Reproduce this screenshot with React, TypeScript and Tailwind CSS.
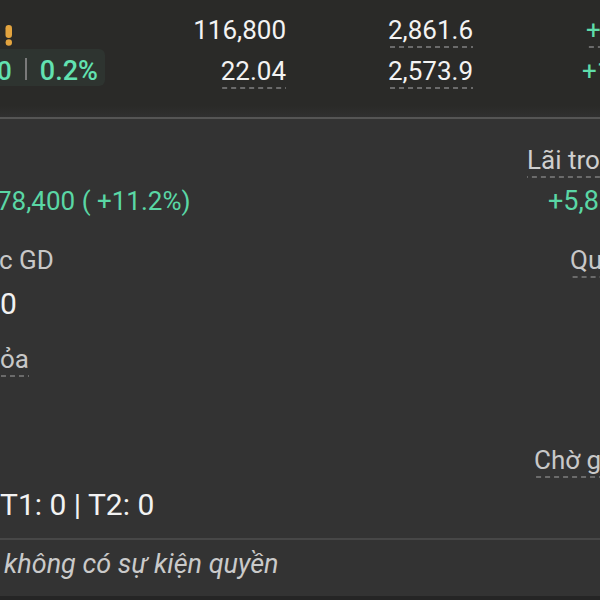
import React from "react";

// dotted underline used by the app under tappable labels / numbers
const dash =
  "inline-block whitespace-nowrap pb-[3px] bg-[linear-gradient(to_right,#6b6b6b_55%,transparent_55%)] bg-[length:9px_2px] bg-bottom bg-repeat-x";

const Warn = () => (
  <svg width="18" height="26" viewBox="0 0 18 26" className="mt-[25px]">
    <rect x="5.5" y="0" width="6.5" height="13" rx="3.2" fill="#e3a43f" />
    <circle cx="8.8" cy="17.5" r="3.2" fill="#e3a43f" />
  </svg>
);

const Row: React.FC<{ className?: string; children?: React.ReactNode }> = ({ className, children }) => (
  <div className={"flex items-start " + (className ?? "")}>{children}</div>
);

export default function App() {
  return (
    <div className="w-[600px] h-[600px] overflow-hidden bg-[#333333] font-['Roboto',sans-serif] flex flex-col">
      {/* watchlist rows */}
      <div className="h-[106px] shrink-0 bg-[#2a2a28] pt-[15px]">
        <div className="grid grid-cols-[105px_181px_102px_86px_126px] h-[41px] text-[26px] leading-[30px] text-[#f3f3f3]">
          <div className="-mt-[15px]">
            <Warn />
          </div>
          <div className="text-right">116,800</div>
          <div />
          <div>
            <span className={dash}>2,861.6</span>
          </div>
          <div className="pl-[112px] text-[#5fdcaa] whitespace-nowrap">
            <span className={dash}>+</span>
          </div>
        </div>
        <div className="grid grid-cols-[105px_181px_102px_86px_126px] h-[41px] text-[26px] leading-[30px] text-[#f3f3f3]">
          <div className="-mt-[7px] h-[37px] pt-[7px] rounded-r-[6px] bg-[#2e3430] flex items-start text-[#62e2b1] font-medium overflow-hidden">
            <span className="-ml-[3px]">0</span>
            <span className="ml-[13px] mr-[13px] mt-[2px] w-[2px] h-[22px] bg-[#7a7a7a]" />
            <span className="text-[27px]">0.2%</span>
          </div>
          <div className="text-right">
            <span className={dash}>22.04</span>
          </div>
          <div />
          <div>
            <span className={dash}>2,573.9</span>
          </div>
          <div className="pl-[108px] text-[#5fdcaa] whitespace-nowrap">+1</div>
        </div>
      </div>
      <div className="h-[11px] shrink-0 bg-gradient-to-b from-[#2a2a28] to-[#303030]" />
      <div className="h-[2px] shrink-0 bg-[#555555]" />

      {/* position detail */}
      <div className="flex-1 flex flex-col text-[26px] leading-[30px]">
        <Row className="mt-[26px] h-[33px]">
          <span className="ml-auto w-[73px] shrink-0 text-[#cfcfcf]">
            <span className={dash}>Lãi tro</span>
          </span>
        </Row>
        <Row className="mt-[8px] h-[30px] text-[#5ad7a5]">
          <span className="-ml-[3px] whitespace-nowrap">78,400 ( +11.2%)</span>
          <span className="ml-auto w-[52px] shrink-0 whitespace-nowrap text-[27px]">+5,8</span>
        </Row>
        <Row className="mt-[29px] h-[33px] text-[#c8c8c8]">
          <span className="-ml-[1px] whitespace-nowrap">c GD</span>
          <span className="ml-auto w-[30px] shrink-0">
            <span className={dash}>Qu</span>
          </span>
        </Row>
        <Row className="mt-[8px] h-[36px] text-[30px] leading-[36px] text-[#f2f2f2]">
          <span>0</span>
        </Row>
        <Row className="mt-[22px] h-[33px] text-[#c8c8c8]">
          <span className={dash}>ỏa</span>
        </Row>
        <Row className="mt-[68px] h-[33px] text-[#c8c8c8]">
          <span className="ml-auto w-[66px] shrink-0">
            <span className={dash}>Chờ g</span>
          </span>
        </Row>
        <Row className="mt-[9px] h-[36px] text-[30px] leading-[36px] text-[#f2f2f2]">
          <span className="whitespace-nowrap">T1: 0 | T2: 0</span>
        </Row>
        <div className="mt-[15px] h-[2px] bg-[#474747]" />
        <div className="mt-[9px] h-[30px] pl-[4px] italic text-[27px] text-[#cacaca] whitespace-nowrap">
          không có sự kiện quyền
        </div>
        <div className="mt-auto h-[4px] bg-[#252525]" />
      </div>
    </div>
  );
}
